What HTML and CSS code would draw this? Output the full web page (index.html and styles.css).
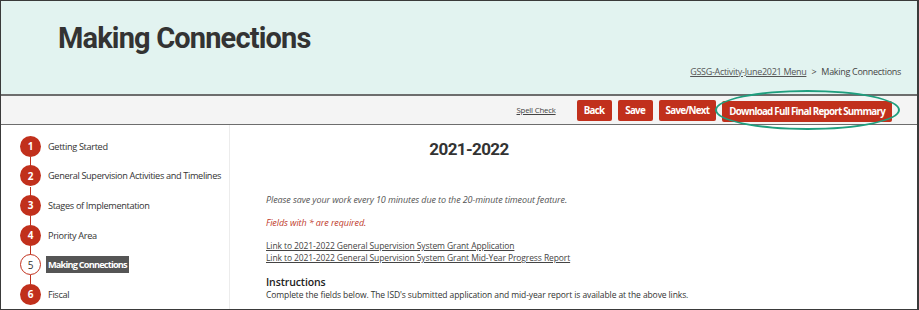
FILE: index.html
```html
<!DOCTYPE html>
<html>
<head>
  <title>Making Connections</title>
  <link rel="stylesheet" href="styles.css">
</head>
<body>
  <div class="frame">
    <div class="banner">
      <h1 class="page-title">Making Connections</h1>
      <div class="crumbs">
        <a href="#">GSSG-Activity-June2021 Menu</a>
        <span class="crumb-sep">&gt;</span>
        <span>Making Connections</span>
      </div>
    </div>

    <div class="toolbar">
      <a href="#" class="spell-check">Spell Check</a>
      <button class="btn">Back</button>
      <button class="btn">Save</button>
      <button class="btn">Save/Next</button>
      <span class="callout">
        <button class="btn">Download Full Final Report Summary</button>
        <span class="callout-ring"></span>
      </span>
    </div>

    <div class="content">
      <ol class="steps">
        <li class="step"><span class="step-num">1</span><span class="step-label">Getting Started</span></li>
        <li class="step"><span class="step-num">2</span><span class="step-label">General Supervision Activities and Timelines</span></li>
        <li class="step"><span class="step-num">3</span><span class="step-label">Stages of Implementation</span></li>
        <li class="step"><span class="step-num">4</span><span class="step-label">Priority Area</span></li>
        <li class="step current"><span class="step-num">5</span><span class="step-label">Making Connections</span></li>
        <li class="step"><span class="step-num">6</span><span class="step-label">Fiscal</span></li>
      </ol>

      <div class="main">
        <h2 class="year">2021-2022</h2>
        <p class="note">Please save your work every 10 minutes due to the 20-minute timeout feature.</p>
        <p class="note required">Fields with * are required.</p>
        <div class="doc-links">
          <a href="#">Link to 2021-2022 General Supervision System Grant Application</a>
          <a href="#">Link to 2021-2022 General Supervision System Grant Mid-Year Progress Report</a>
        </div>
        <h3 class="section-title">Instructions</h3>
        <p class="section-text">Complete the fields below. The ISD's submitted application and mid-year report is available at the above links.</p>
      </div>
    </div>
  </div>
</body>
</html>
```

FILE: styles.css
```css
body {
  margin: 0;
  padding: 0;
  background-color: #ffffff;
  font-family: "Open Sans", Arial, sans-serif;
  color: #333333;
}

.frame {
  width: 919px;
  height: 310px;
  box-sizing: border-box;
  border: 1px solid #3a3a3a;
  border-right-width: 2px;
  overflow: hidden;
}

/* header band */
.banner {
  height: 93px;
  box-sizing: border-box;
  background-color: #e2f3f0;
  padding: 19px 16px 0 57px;
}

.page-title {
  margin: 0;
  font-family: Roboto, Arial, sans-serif;
  font-weight: 700;
  font-size: 29px;
  letter-spacing: -0.85px;
  line-height: 36px;
  color: #333333;
}

.crumbs {
  margin-top: 9px;
  text-align: right;
  font-size: 9px;
  letter-spacing: -0.3px;
  color: #444444;
}

.crumbs a {
  color: #555555;
}

.crumb-sep {
  margin: 0 3px;
}

/* button strip */
.toolbar {
  height: 28px;
  background-color: #f4f4f4;
  border-top: 2px solid #6d6d6d;
  border-bottom: 1px solid #6d6d6d;
  display: flex;
  align-items: center;
  justify-content: flex-end;
  gap: 6px;
  padding-right: 25px;
}

.spell-check {
  font-size: 7.8px;
  color: #444444;
  margin-right: 15px;
  letter-spacing: -0.2px;
}

.btn {
  height: 21px;
  min-width: 35px;
  padding: 0 7px;
  border: none;
  border-radius: 2px;
  background-color: #c1301c;
  color: #ffffff;
  font-family: "Open Sans", Arial, sans-serif;
  font-weight: 700;
  font-size: 9.8px;
  letter-spacing: -0.75px;
  cursor: pointer;
}

.callout {
  position: relative;
  display: inline-block;
}

.callout-ring {
  position: absolute;
  left: -7px;
  right: -8px;
  top: -8px;
  bottom: -8px;
  border: 2px solid #1f9e7e;
  border-radius: 50%;
}

/* body */
.content {
  display: flex;
  height: 184px;
}

.steps {
  list-style: none;
  margin: 0;
  padding: 11px 0 0 19px;
  width: 209px;
  border-right: 1px solid #ececec;
}

.step {
  position: relative;
  display: flex;
  align-items: center;
  height: 29.6px;
}

.step:not(:last-child)::after {
  content: "";
  position: absolute;
  left: 10px;
  top: 21px;
  height: 9px;
  border-left: 1px solid #c1301c;
}

.step-num {
  width: 21px;
  height: 21px;
  box-sizing: border-box;
  border-radius: 50%;
  background-color: #c1301c;
  color: #ffffff;
  font-weight: 700;
  font-size: 10px;
  display: flex;
  align-items: center;
  justify-content: center;
  margin-top: -9px;
}

.step-label {
  margin-left: 5px;
  margin-top: -9px;
  font-size: 9.2px;
  letter-spacing: -0.35px;
  color: #333333;
  padding: 2px 2px;
}

.current .step-num {
  background-color: #ffffff;
  border: 1px solid #c1301c;
  color: #333333;
  font-weight: 400;
}

.current .step-label {
  background-color: #555555;
  color: #ffffff;
  font-weight: 700;
  letter-spacing: -0.8px;
  margin-left: 5px;
}

.main {
  padding: 14px 0 0 36px;
  font-size: 8.5px;
  letter-spacing: -0.1px;
}

.year {
  width: 406px;
  margin: 0;
  text-align: center;
  font-family: Roboto, Arial, sans-serif;
  font-weight: 700;
  font-size: 17px;
  letter-spacing: -0.6px;
  line-height: 20px;
  color: #333333;
}

.note {
  margin: 35px 0 0;
  font-style: italic;
  font-size: 9px;
  letter-spacing: -0.1px;
  color: #555555;
  line-height: 12px;
}

.required {
  margin-top: 11px;
  color: #c0392b;
}

.doc-links {
  margin-top: 11px;
  display: flex;
  flex-direction: column;
}

.doc-links a {
  color: #444444;
  line-height: 12px;
}

.section-title {
  margin: 12px 0 0;
  font-size: 10.5px;
  font-weight: 600;
  line-height: 13px;
  color: #222222;
}

.section-text {
  margin: 0;
  line-height: 12px;
  color: #333333;
}
```
